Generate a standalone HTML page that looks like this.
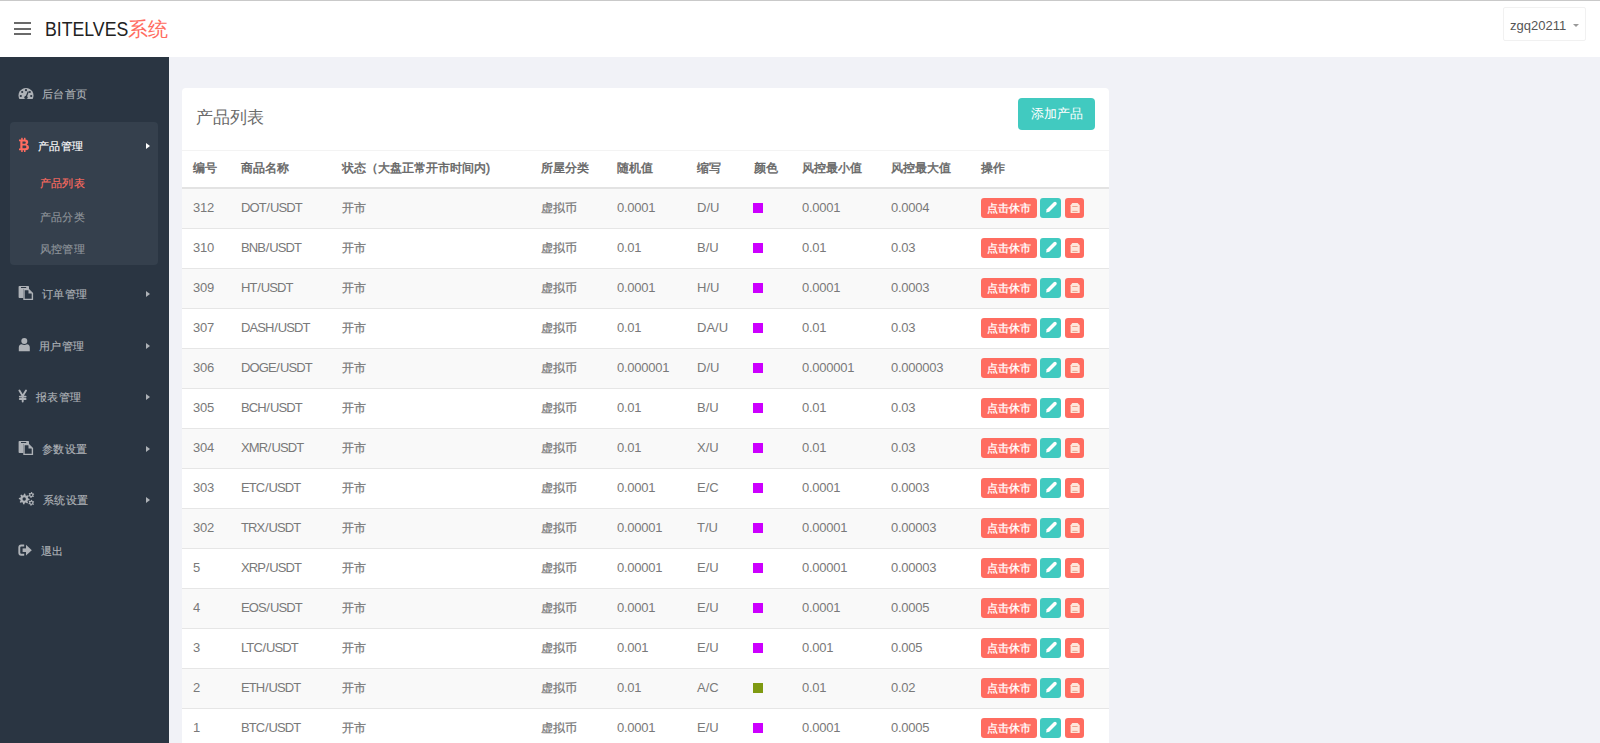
<!DOCTYPE html><html><head><meta charset="utf-8"><style>
*{margin:0;padding:0;box-sizing:border-box}
html,body{width:1600px;height:743px;overflow:hidden}
body{background:#f1f2f7;font-family:"Liberation Sans",sans-serif;font-size:13px;color:#797979;position:relative}
.abs{position:absolute}
.topline{left:0;top:0;width:1600px;height:1px;background:#c9c9c9}
.header{left:0;top:1px;width:1600px;height:56px;background:#fff}
.burger{left:14px;width:17px;height:2px;background:#6a6a6a}
.logo{left:45px;top:17px;font-size:20px;color:#222;white-space:nowrap;line-height:24px;transform-origin:0 0;transform:scaleX(.885)}
.logo2{left:128px;top:17px;font-size:20px;color:#ff6c60;white-space:nowrap;line-height:24px}
.user{left:1503px;top:7px;width:83px;height:34px;border:1px solid #f1f1f1;border-radius:2px}
.user .t{position:absolute;left:6px;top:10px;font-size:13px;color:#555;line-height:16px}
.caret{left:1573px;top:24px;width:0;height:0;border-left:3px solid transparent;border-right:3px solid transparent;border-top:3px solid #999}
.sidebar{left:0;top:57px;width:169px;height:686px;background:#2a3542}
.sub{left:10px;top:122px;width:148px;height:143px;background:#35404d;border-radius:4px}
.si{font-size:11px;letter-spacing:0.45px;-webkit-text-stroke:0.15px currentColor;color:#aeb2b7;line-height:14px;white-space:nowrap}
.arr{width:0;height:0;border-top:3.5px solid transparent;border-bottom:3.5px solid transparent;border-left:4px solid #aeb2b7}
.card{left:182px;top:88px;width:927px;height:700px;background:#fff;border-radius:4px}
.title{left:196px;top:107px;font-size:17px;color:#6a6a6a;line-height:22px}
.addbtn{left:1018px;top:98px;width:77px;height:32px;background:#41cac0;border-radius:4px;color:#fff;font-size:13px;line-height:32px;text-align:center}
.hline{left:182px;top:150px;width:927px;height:1px;background:#f3f3f3}
.th{top:161px;font-size:12.2px;font-weight:normal;-webkit-text-stroke:0.45px #666;color:#666;line-height:14px;white-space:nowrap}
.thb{left:182px;top:187px;width:927px;height:2px;background:#e3e3e3}
.row{left:182px;width:927px;height:40px}
.row.odd{background:#f9f9f9}
.rb{left:182px;width:927px;height:1px;background:#e6e6e6}
.td{font-size:13px;color:#797979;line-height:14px;white-space:nowrap}
.td.cj{font-size:12px;-webkit-text-stroke:0.25px #797979}
.td.nm{letter-spacing:-0.9px}
.sl{margin:0 0.9px 0 0.6px}
.td.num{letter-spacing:-0.25px}
.sq{width:10px;height:10px}
.b1{left:981px;width:56px;height:20px;background:#ff6c60;border-radius:3px;color:#fff;font-size:11px;-webkit-text-stroke:0.3px #fff;line-height:20px;text-align:center}
.b2{left:1040px;width:21px;height:20px;background:#41cac0;border-radius:3px}
.b3{left:1065px;width:19px;height:20px;background:#ff6c60;border-radius:3px}
.b2 svg,.b3 svg{position:absolute;left:0;top:0}
</style></head><body>
<div class="abs header"></div><div class="abs topline"></div>
<div class="abs burger" style="top:22px"></div>
<div class="abs burger" style="top:28px"></div>
<div class="abs burger" style="top:33px"></div>
<div class="abs logo">BITELVES</div><div class="abs logo2">系统</div>
<div class="abs user"><div class="t">zgq20211</div></div><div class="abs caret"></div>
<div class="abs sidebar"></div>
<div class="abs sub"></div>
<svg class="abs" style="left:18px;top:87px" width="16" height="13" viewBox="0 0 16 13">
<path d="M1.37 12 A7.5 7.5 0 1 1 14.63 12 Z" fill="#aeb2b7"/>
<circle cx="8" cy="3.2" r="1.1" fill="#2a3542"/><circle cx="4.2" cy="5" r="1.1" fill="#2a3542"/><circle cx="11.8" cy="5" r="1.1" fill="#2a3542"/>
<circle cx="2.8" cy="9" r="1.1" fill="#2a3542"/><circle cx="13.2" cy="9" r="1.1" fill="#2a3542"/>
<path d="M8 10.3 L10.3 4.6" stroke="#2a3542" stroke-width="1.3"/><circle cx="8" cy="10.4" r="1.7" fill="#2a3542"/></svg>
<div class="abs si" style="left:42px;top:87px;color:#aeb2b7">后台首页</div>
<svg class="abs" style="left:18px;top:137px" width="13" height="16" viewBox="0 0 13 16">
<rect x="3.2" y="0.8" width="1.5" height="2.5" fill="#ff6c60"/><rect x="6" y="0.8" width="1.5" height="2.5" fill="#ff6c60"/>
<rect x="3.2" y="12.5" width="1.5" height="2.5" fill="#ff6c60"/><rect x="6" y="12.5" width="1.5" height="2.5" fill="#ff6c60"/>
<path d="M1 2.6 H7.2 Q10.2 2.6 10.2 5.2 Q10.2 6.8 8.8 7.4 Q11 8 11 10.3 Q11 13.2 7.6 13.2 H1 V11.6 H2.3 V4.2 H1 Z M4.5 4.4 V6.8 H6.6 Q7.8 6.8 7.8 5.6 Q7.8 4.4 6.6 4.4 Z M4.5 8.6 V11.3 H7 Q8.4 11.3 8.4 9.95 Q8.4 8.6 7 8.6 Z" fill="#ff6c60" fill-rule="evenodd"/></svg>
<div class="abs si" style="left:38px;top:139px;color:#fff">产品管理</div>
<div class="abs arr" style="left:146px;top:143px;border-left-color:#fff"></div>
<svg class="abs" style="left:18px;top:285px" width="16" height="16" viewBox="0 0 16 16">
<rect x="0.6" y="1" width="10.4" height="12" rx="0.8" fill="#aeb2b7"/>
<rect x="3" y="2" width="5.2" height="1" fill="#2a3542"/>
<path d="M5.2 4 H11.2 L15 7.8 V15 H5.2 Z" fill="#2a3542"/>
<path d="M6 4.6 H10.8 L14.4 8.2 V14.4 H6 Z" fill="none" stroke="#aeb2b7" stroke-width="1.4"/>
<path d="M10.5 4.6 V8.5 H14.4" fill="#aeb2b7"/></svg>
<div class="abs si" style="left:42px;top:287px;color:#aeb2b7">订单管理</div>
<div class="abs arr" style="left:146px;top:291px;border-left-color:#aeb2b7"></div>
<svg class="abs" style="left:18px;top:337px" width="13" height="15" viewBox="0 0 13 15">
<circle cx="6.3" cy="4" r="3" fill="#aeb2b7"/>
<path d="M0.8 14.2 V10.5 Q0.8 7.6 3.6 7.3 Q6.3 8.6 9 7.3 Q11.8 7.6 11.8 10.5 V14.2 Z" fill="#aeb2b7"/></svg>
<div class="abs si" style="left:39px;top:339px;color:#aeb2b7">用户管理</div>
<div class="abs arr" style="left:146px;top:343px;border-left-color:#aeb2b7"></div>
<svg class="abs" style="left:18px;top:389px" width="10" height="14" viewBox="0 0 10 14">
<path d="M1.4 1.6 L4.7 7 L8 1.6 M4.7 7 V12.6 M1.8 7.6 H7.6 M1.8 10 H7.6" stroke="#aeb2b7" stroke-width="1.9" fill="none" stroke-linecap="round"/></svg>
<div class="abs si" style="left:36px;top:390px;color:#aeb2b7">报表管理</div>
<div class="abs arr" style="left:146px;top:394px;border-left-color:#aeb2b7"></div>
<svg class="abs" style="left:18px;top:440px" width="16" height="16" viewBox="0 0 16 16">
<rect x="0.6" y="1" width="10.4" height="12" rx="0.8" fill="#aeb2b7"/>
<rect x="3" y="2" width="5.2" height="1" fill="#2a3542"/>
<path d="M5.2 4 H11.2 L15 7.8 V15 H5.2 Z" fill="#2a3542"/>
<path d="M6 4.6 H10.8 L14.4 8.2 V14.4 H6 Z" fill="none" stroke="#aeb2b7" stroke-width="1.4"/>
<path d="M10.5 4.6 V8.5 H14.4" fill="#aeb2b7"/></svg>
<div class="abs si" style="left:42px;top:442px;color:#aeb2b7">参数设置</div>
<div class="abs arr" style="left:146px;top:446px;border-left-color:#aeb2b7"></div>
<svg class="abs" style="left:18px;top:492px" width="18" height="15" viewBox="0 0 18 15">
<path d="M6.20 1.60 L7.25 1.70 L7.69 3.40 L8.37 3.76 L10.02 3.18 L10.69 4.00 L9.80 5.51 L10.03 6.24 L11.60 7.00 L11.50 8.05 L9.80 8.49 L9.44 9.17 L10.02 10.82 L9.20 11.49 L7.69 10.60 L6.96 10.83 L6.20 12.40 L5.15 12.30 L4.71 10.60 L4.03 10.24 L2.38 10.82 L1.71 10.00 L2.60 8.49 L2.37 7.76 L0.80 7.00 L0.90 5.95 L2.60 5.51 L2.96 4.83 L2.38 3.18 L3.20 2.51 L4.71 3.40 L5.44 3.17 Z" fill="#aeb2b7"/><circle cx="6.2" cy="7" r="1.7" fill="#2a3542"/><path d="M13.30 0.00 L14.08 0.10 L14.35 1.18 L14.78 1.52 L15.90 1.50 L16.20 2.22 L15.40 3.00 L15.33 3.54 L15.90 4.50 L15.42 5.12 L14.35 4.82 L13.84 5.03 L13.30 6.00 L12.52 5.90 L12.25 4.82 L11.82 4.48 L10.70 4.50 L10.40 3.78 L11.20 3.00 L11.27 2.46 L10.70 1.50 L11.18 0.88 L12.25 1.18 L12.76 0.97 Z" fill="#aeb2b7"/><circle cx="13.3" cy="3" r="1" fill="#2a3542"/><path d="M13.30 7.80 L14.08 7.90 L14.35 8.98 L14.78 9.32 L15.90 9.30 L16.20 10.02 L15.40 10.80 L15.33 11.34 L15.90 12.30 L15.42 12.92 L14.35 12.62 L13.84 12.83 L13.30 13.80 L12.52 13.70 L12.25 12.62 L11.82 12.28 L10.70 12.30 L10.40 11.58 L11.20 10.80 L11.27 10.26 L10.70 9.30 L11.18 8.68 L12.25 8.98 L12.76 8.77 Z" fill="#aeb2b7"/><circle cx="13.3" cy="10.8" r="1" fill="#2a3542"/></svg>
<div class="abs si" style="left:43px;top:493px;color:#aeb2b7">系统设置</div>
<div class="abs arr" style="left:146px;top:497px;border-left-color:#aeb2b7"></div>
<svg class="abs" style="left:18px;top:544px" width="15" height="13" viewBox="0 0 15 13">
<path d="M6.2 1.5 H3.2 Q1.3 1.5 1.3 3.4 V8.8 Q1.3 10.7 3.2 10.7 H6.2" stroke="#aeb2b7" stroke-width="1.9" fill="none"/>
<rect x="4.6" y="4.4" width="4.5" height="3.6" fill="#aeb2b7"/><path d="M8 0.8 L13.8 6.2 L8 11.6 Z" fill="#aeb2b7"/></svg>
<div class="abs si" style="left:41px;top:544px;color:#aeb2b7">退出</div>
<div class="abs si" style="left:39.5px;top:176px;color:#ff6c60">产品列表</div>
<div class="abs si" style="left:39.5px;top:210px;color:#8f959b">产品分类</div>
<div class="abs si" style="left:39.5px;top:242px;color:#8f959b">风控管理</div>
<div class="abs card"></div>
<div class="abs title">产品列表</div>
<div class="abs addbtn">添加产品</div>
<div class="abs hline"></div>
<div class="abs th" style="left:193px">编号</div>
<div class="abs th" style="left:241px">商品名称</div>
<div class="abs th" style="left:342px">状态（大盘正常开市时间内)</div>
<div class="abs th" style="left:541px">所屋分类</div>
<div class="abs th" style="left:617px">随机值</div>
<div class="abs th" style="left:697px">缩写</div>
<div class="abs th" style="left:754px">颜色</div>
<div class="abs th" style="left:802px">风控最小值</div>
<div class="abs th" style="left:891px">风控最大值</div>
<div class="abs th" style="left:981px">操作</div>
<div class="abs thb"></div>
<div class="abs row odd" style="top:189px"></div>
<div class="abs rb" style="top:228px"></div>
<div class="abs td num" style="left:193px;top:201px">312</div>
<div class="abs td nm" style="left:241px;top:201px">DOT<span class="sl">/</span>USDT</div>
<div class="abs td cj" style="left:342px;top:201px">开市</div>
<div class="abs td cj" style="left:541px;top:201px">虚拟币</div>
<div class="abs td num" style="left:617px;top:201px">0.0001</div>
<div class="abs td " style="left:697px;top:201px">D/U</div>
<div class="abs sq" style="left:753px;top:203px;background:#cc00ff"></div>
<div class="abs td num" style="left:802px;top:201px">0.0001</div>
<div class="abs td num" style="left:891px;top:201px">0.0004</div>
<div class="abs b1" style="top:198px">点击休市</div>
<div class="abs b2" style="top:198px"><svg width="21" height="20" viewBox="0 0 21 20"><path d="M13.73 4.23 Q15 3.2 16.27 4.23 Q17.3 5.5 16.27 6.77 L9.27 13.77 L6.1 14.4 L6.73 11.23 Z" fill="#fff"/></svg></div>
<div class="abs b3" style="top:198px"><svg width="19" height="20" viewBox="0 0 19 20"><path d="M7.3 5 H12.6 L14.7 7.3 V14.4 Q14.7 15.1 14 15.1 H6.3 Q5.6 15.1 5.6 14.4 V7.3 Z" fill="#fde6da"/><rect x="7.3" y="8" width="5.3" height="1" fill="#f0a08a"/><rect x="7.3" y="12.9" width="5.3" height="1" fill="#f0a08a"/></svg></div>
<div class="abs row " style="top:229px"></div>
<div class="abs rb" style="top:268px"></div>
<div class="abs td num" style="left:193px;top:241px">310</div>
<div class="abs td nm" style="left:241px;top:241px">BNB<span class="sl">/</span>USDT</div>
<div class="abs td cj" style="left:342px;top:241px">开市</div>
<div class="abs td cj" style="left:541px;top:241px">虚拟币</div>
<div class="abs td num" style="left:617px;top:241px">0.01</div>
<div class="abs td " style="left:697px;top:241px">B/U</div>
<div class="abs sq" style="left:753px;top:243px;background:#cc00ff"></div>
<div class="abs td num" style="left:802px;top:241px">0.01</div>
<div class="abs td num" style="left:891px;top:241px">0.03</div>
<div class="abs b1" style="top:238px">点击休市</div>
<div class="abs b2" style="top:238px"><svg width="21" height="20" viewBox="0 0 21 20"><path d="M13.73 4.23 Q15 3.2 16.27 4.23 Q17.3 5.5 16.27 6.77 L9.27 13.77 L6.1 14.4 L6.73 11.23 Z" fill="#fff"/></svg></div>
<div class="abs b3" style="top:238px"><svg width="19" height="20" viewBox="0 0 19 20"><path d="M7.3 5 H12.6 L14.7 7.3 V14.4 Q14.7 15.1 14 15.1 H6.3 Q5.6 15.1 5.6 14.4 V7.3 Z" fill="#fde6da"/><rect x="7.3" y="8" width="5.3" height="1" fill="#f0a08a"/><rect x="7.3" y="12.9" width="5.3" height="1" fill="#f0a08a"/></svg></div>
<div class="abs row odd" style="top:269px"></div>
<div class="abs rb" style="top:308px"></div>
<div class="abs td num" style="left:193px;top:281px">309</div>
<div class="abs td nm" style="left:241px;top:281px">HT<span class="sl">/</span>USDT</div>
<div class="abs td cj" style="left:342px;top:281px">开市</div>
<div class="abs td cj" style="left:541px;top:281px">虚拟币</div>
<div class="abs td num" style="left:617px;top:281px">0.0001</div>
<div class="abs td " style="left:697px;top:281px">H/U</div>
<div class="abs sq" style="left:753px;top:283px;background:#cc00ff"></div>
<div class="abs td num" style="left:802px;top:281px">0.0001</div>
<div class="abs td num" style="left:891px;top:281px">0.0003</div>
<div class="abs b1" style="top:278px">点击休市</div>
<div class="abs b2" style="top:278px"><svg width="21" height="20" viewBox="0 0 21 20"><path d="M13.73 4.23 Q15 3.2 16.27 4.23 Q17.3 5.5 16.27 6.77 L9.27 13.77 L6.1 14.4 L6.73 11.23 Z" fill="#fff"/></svg></div>
<div class="abs b3" style="top:278px"><svg width="19" height="20" viewBox="0 0 19 20"><path d="M7.3 5 H12.6 L14.7 7.3 V14.4 Q14.7 15.1 14 15.1 H6.3 Q5.6 15.1 5.6 14.4 V7.3 Z" fill="#fde6da"/><rect x="7.3" y="8" width="5.3" height="1" fill="#f0a08a"/><rect x="7.3" y="12.9" width="5.3" height="1" fill="#f0a08a"/></svg></div>
<div class="abs row " style="top:309px"></div>
<div class="abs rb" style="top:348px"></div>
<div class="abs td num" style="left:193px;top:321px">307</div>
<div class="abs td nm" style="left:241px;top:321px">DASH<span class="sl">/</span>USDT</div>
<div class="abs td cj" style="left:342px;top:321px">开市</div>
<div class="abs td cj" style="left:541px;top:321px">虚拟币</div>
<div class="abs td num" style="left:617px;top:321px">0.01</div>
<div class="abs td " style="left:697px;top:321px">DA/U</div>
<div class="abs sq" style="left:753px;top:323px;background:#cc00ff"></div>
<div class="abs td num" style="left:802px;top:321px">0.01</div>
<div class="abs td num" style="left:891px;top:321px">0.03</div>
<div class="abs b1" style="top:318px">点击休市</div>
<div class="abs b2" style="top:318px"><svg width="21" height="20" viewBox="0 0 21 20"><path d="M13.73 4.23 Q15 3.2 16.27 4.23 Q17.3 5.5 16.27 6.77 L9.27 13.77 L6.1 14.4 L6.73 11.23 Z" fill="#fff"/></svg></div>
<div class="abs b3" style="top:318px"><svg width="19" height="20" viewBox="0 0 19 20"><path d="M7.3 5 H12.6 L14.7 7.3 V14.4 Q14.7 15.1 14 15.1 H6.3 Q5.6 15.1 5.6 14.4 V7.3 Z" fill="#fde6da"/><rect x="7.3" y="8" width="5.3" height="1" fill="#f0a08a"/><rect x="7.3" y="12.9" width="5.3" height="1" fill="#f0a08a"/></svg></div>
<div class="abs row odd" style="top:349px"></div>
<div class="abs rb" style="top:388px"></div>
<div class="abs td num" style="left:193px;top:361px">306</div>
<div class="abs td nm" style="left:241px;top:361px">DOGE<span class="sl">/</span>USDT</div>
<div class="abs td cj" style="left:342px;top:361px">开市</div>
<div class="abs td cj" style="left:541px;top:361px">虚拟币</div>
<div class="abs td num" style="left:617px;top:361px">0.000001</div>
<div class="abs td " style="left:697px;top:361px">D/U</div>
<div class="abs sq" style="left:753px;top:363px;background:#cc00ff"></div>
<div class="abs td num" style="left:802px;top:361px">0.000001</div>
<div class="abs td num" style="left:891px;top:361px">0.000003</div>
<div class="abs b1" style="top:358px">点击休市</div>
<div class="abs b2" style="top:358px"><svg width="21" height="20" viewBox="0 0 21 20"><path d="M13.73 4.23 Q15 3.2 16.27 4.23 Q17.3 5.5 16.27 6.77 L9.27 13.77 L6.1 14.4 L6.73 11.23 Z" fill="#fff"/></svg></div>
<div class="abs b3" style="top:358px"><svg width="19" height="20" viewBox="0 0 19 20"><path d="M7.3 5 H12.6 L14.7 7.3 V14.4 Q14.7 15.1 14 15.1 H6.3 Q5.6 15.1 5.6 14.4 V7.3 Z" fill="#fde6da"/><rect x="7.3" y="8" width="5.3" height="1" fill="#f0a08a"/><rect x="7.3" y="12.9" width="5.3" height="1" fill="#f0a08a"/></svg></div>
<div class="abs row " style="top:389px"></div>
<div class="abs rb" style="top:428px"></div>
<div class="abs td num" style="left:193px;top:401px">305</div>
<div class="abs td nm" style="left:241px;top:401px">BCH<span class="sl">/</span>USDT</div>
<div class="abs td cj" style="left:342px;top:401px">开市</div>
<div class="abs td cj" style="left:541px;top:401px">虚拟币</div>
<div class="abs td num" style="left:617px;top:401px">0.01</div>
<div class="abs td " style="left:697px;top:401px">B/U</div>
<div class="abs sq" style="left:753px;top:403px;background:#cc00ff"></div>
<div class="abs td num" style="left:802px;top:401px">0.01</div>
<div class="abs td num" style="left:891px;top:401px">0.03</div>
<div class="abs b1" style="top:398px">点击休市</div>
<div class="abs b2" style="top:398px"><svg width="21" height="20" viewBox="0 0 21 20"><path d="M13.73 4.23 Q15 3.2 16.27 4.23 Q17.3 5.5 16.27 6.77 L9.27 13.77 L6.1 14.4 L6.73 11.23 Z" fill="#fff"/></svg></div>
<div class="abs b3" style="top:398px"><svg width="19" height="20" viewBox="0 0 19 20"><path d="M7.3 5 H12.6 L14.7 7.3 V14.4 Q14.7 15.1 14 15.1 H6.3 Q5.6 15.1 5.6 14.4 V7.3 Z" fill="#fde6da"/><rect x="7.3" y="8" width="5.3" height="1" fill="#f0a08a"/><rect x="7.3" y="12.9" width="5.3" height="1" fill="#f0a08a"/></svg></div>
<div class="abs row odd" style="top:429px"></div>
<div class="abs rb" style="top:468px"></div>
<div class="abs td num" style="left:193px;top:441px">304</div>
<div class="abs td nm" style="left:241px;top:441px">XMR<span class="sl">/</span>USDT</div>
<div class="abs td cj" style="left:342px;top:441px">开市</div>
<div class="abs td cj" style="left:541px;top:441px">虚拟币</div>
<div class="abs td num" style="left:617px;top:441px">0.01</div>
<div class="abs td " style="left:697px;top:441px">X/U</div>
<div class="abs sq" style="left:753px;top:443px;background:#cc00ff"></div>
<div class="abs td num" style="left:802px;top:441px">0.01</div>
<div class="abs td num" style="left:891px;top:441px">0.03</div>
<div class="abs b1" style="top:438px">点击休市</div>
<div class="abs b2" style="top:438px"><svg width="21" height="20" viewBox="0 0 21 20"><path d="M13.73 4.23 Q15 3.2 16.27 4.23 Q17.3 5.5 16.27 6.77 L9.27 13.77 L6.1 14.4 L6.73 11.23 Z" fill="#fff"/></svg></div>
<div class="abs b3" style="top:438px"><svg width="19" height="20" viewBox="0 0 19 20"><path d="M7.3 5 H12.6 L14.7 7.3 V14.4 Q14.7 15.1 14 15.1 H6.3 Q5.6 15.1 5.6 14.4 V7.3 Z" fill="#fde6da"/><rect x="7.3" y="8" width="5.3" height="1" fill="#f0a08a"/><rect x="7.3" y="12.9" width="5.3" height="1" fill="#f0a08a"/></svg></div>
<div class="abs row " style="top:469px"></div>
<div class="abs rb" style="top:508px"></div>
<div class="abs td num" style="left:193px;top:481px">303</div>
<div class="abs td nm" style="left:241px;top:481px">ETC<span class="sl">/</span>USDT</div>
<div class="abs td cj" style="left:342px;top:481px">开市</div>
<div class="abs td cj" style="left:541px;top:481px">虚拟币</div>
<div class="abs td num" style="left:617px;top:481px">0.0001</div>
<div class="abs td " style="left:697px;top:481px">E/C</div>
<div class="abs sq" style="left:753px;top:483px;background:#cc00ff"></div>
<div class="abs td num" style="left:802px;top:481px">0.0001</div>
<div class="abs td num" style="left:891px;top:481px">0.0003</div>
<div class="abs b1" style="top:478px">点击休市</div>
<div class="abs b2" style="top:478px"><svg width="21" height="20" viewBox="0 0 21 20"><path d="M13.73 4.23 Q15 3.2 16.27 4.23 Q17.3 5.5 16.27 6.77 L9.27 13.77 L6.1 14.4 L6.73 11.23 Z" fill="#fff"/></svg></div>
<div class="abs b3" style="top:478px"><svg width="19" height="20" viewBox="0 0 19 20"><path d="M7.3 5 H12.6 L14.7 7.3 V14.4 Q14.7 15.1 14 15.1 H6.3 Q5.6 15.1 5.6 14.4 V7.3 Z" fill="#fde6da"/><rect x="7.3" y="8" width="5.3" height="1" fill="#f0a08a"/><rect x="7.3" y="12.9" width="5.3" height="1" fill="#f0a08a"/></svg></div>
<div class="abs row odd" style="top:509px"></div>
<div class="abs rb" style="top:548px"></div>
<div class="abs td num" style="left:193px;top:521px">302</div>
<div class="abs td nm" style="left:241px;top:521px">TRX<span class="sl">/</span>USDT</div>
<div class="abs td cj" style="left:342px;top:521px">开市</div>
<div class="abs td cj" style="left:541px;top:521px">虚拟币</div>
<div class="abs td num" style="left:617px;top:521px">0.00001</div>
<div class="abs td " style="left:697px;top:521px">T/U</div>
<div class="abs sq" style="left:753px;top:523px;background:#cc00ff"></div>
<div class="abs td num" style="left:802px;top:521px">0.00001</div>
<div class="abs td num" style="left:891px;top:521px">0.00003</div>
<div class="abs b1" style="top:518px">点击休市</div>
<div class="abs b2" style="top:518px"><svg width="21" height="20" viewBox="0 0 21 20"><path d="M13.73 4.23 Q15 3.2 16.27 4.23 Q17.3 5.5 16.27 6.77 L9.27 13.77 L6.1 14.4 L6.73 11.23 Z" fill="#fff"/></svg></div>
<div class="abs b3" style="top:518px"><svg width="19" height="20" viewBox="0 0 19 20"><path d="M7.3 5 H12.6 L14.7 7.3 V14.4 Q14.7 15.1 14 15.1 H6.3 Q5.6 15.1 5.6 14.4 V7.3 Z" fill="#fde6da"/><rect x="7.3" y="8" width="5.3" height="1" fill="#f0a08a"/><rect x="7.3" y="12.9" width="5.3" height="1" fill="#f0a08a"/></svg></div>
<div class="abs row " style="top:549px"></div>
<div class="abs rb" style="top:588px"></div>
<div class="abs td num" style="left:193px;top:561px">5</div>
<div class="abs td nm" style="left:241px;top:561px">XRP<span class="sl">/</span>USDT</div>
<div class="abs td cj" style="left:342px;top:561px">开市</div>
<div class="abs td cj" style="left:541px;top:561px">虚拟币</div>
<div class="abs td num" style="left:617px;top:561px">0.00001</div>
<div class="abs td " style="left:697px;top:561px">E/U</div>
<div class="abs sq" style="left:753px;top:563px;background:#cc00ff"></div>
<div class="abs td num" style="left:802px;top:561px">0.00001</div>
<div class="abs td num" style="left:891px;top:561px">0.00003</div>
<div class="abs b1" style="top:558px">点击休市</div>
<div class="abs b2" style="top:558px"><svg width="21" height="20" viewBox="0 0 21 20"><path d="M13.73 4.23 Q15 3.2 16.27 4.23 Q17.3 5.5 16.27 6.77 L9.27 13.77 L6.1 14.4 L6.73 11.23 Z" fill="#fff"/></svg></div>
<div class="abs b3" style="top:558px"><svg width="19" height="20" viewBox="0 0 19 20"><path d="M7.3 5 H12.6 L14.7 7.3 V14.4 Q14.7 15.1 14 15.1 H6.3 Q5.6 15.1 5.6 14.4 V7.3 Z" fill="#fde6da"/><rect x="7.3" y="8" width="5.3" height="1" fill="#f0a08a"/><rect x="7.3" y="12.9" width="5.3" height="1" fill="#f0a08a"/></svg></div>
<div class="abs row odd" style="top:589px"></div>
<div class="abs rb" style="top:628px"></div>
<div class="abs td num" style="left:193px;top:601px">4</div>
<div class="abs td nm" style="left:241px;top:601px">EOS<span class="sl">/</span>USDT</div>
<div class="abs td cj" style="left:342px;top:601px">开市</div>
<div class="abs td cj" style="left:541px;top:601px">虚拟币</div>
<div class="abs td num" style="left:617px;top:601px">0.0001</div>
<div class="abs td " style="left:697px;top:601px">E/U</div>
<div class="abs sq" style="left:753px;top:603px;background:#cc00ff"></div>
<div class="abs td num" style="left:802px;top:601px">0.0001</div>
<div class="abs td num" style="left:891px;top:601px">0.0005</div>
<div class="abs b1" style="top:598px">点击休市</div>
<div class="abs b2" style="top:598px"><svg width="21" height="20" viewBox="0 0 21 20"><path d="M13.73 4.23 Q15 3.2 16.27 4.23 Q17.3 5.5 16.27 6.77 L9.27 13.77 L6.1 14.4 L6.73 11.23 Z" fill="#fff"/></svg></div>
<div class="abs b3" style="top:598px"><svg width="19" height="20" viewBox="0 0 19 20"><path d="M7.3 5 H12.6 L14.7 7.3 V14.4 Q14.7 15.1 14 15.1 H6.3 Q5.6 15.1 5.6 14.4 V7.3 Z" fill="#fde6da"/><rect x="7.3" y="8" width="5.3" height="1" fill="#f0a08a"/><rect x="7.3" y="12.9" width="5.3" height="1" fill="#f0a08a"/></svg></div>
<div class="abs row " style="top:629px"></div>
<div class="abs rb" style="top:668px"></div>
<div class="abs td num" style="left:193px;top:641px">3</div>
<div class="abs td nm" style="left:241px;top:641px">LTC<span class="sl">/</span>USDT</div>
<div class="abs td cj" style="left:342px;top:641px">开市</div>
<div class="abs td cj" style="left:541px;top:641px">虚拟币</div>
<div class="abs td num" style="left:617px;top:641px">0.001</div>
<div class="abs td " style="left:697px;top:641px">E/U</div>
<div class="abs sq" style="left:753px;top:643px;background:#cc00ff"></div>
<div class="abs td num" style="left:802px;top:641px">0.001</div>
<div class="abs td num" style="left:891px;top:641px">0.005</div>
<div class="abs b1" style="top:638px">点击休市</div>
<div class="abs b2" style="top:638px"><svg width="21" height="20" viewBox="0 0 21 20"><path d="M13.73 4.23 Q15 3.2 16.27 4.23 Q17.3 5.5 16.27 6.77 L9.27 13.77 L6.1 14.4 L6.73 11.23 Z" fill="#fff"/></svg></div>
<div class="abs b3" style="top:638px"><svg width="19" height="20" viewBox="0 0 19 20"><path d="M7.3 5 H12.6 L14.7 7.3 V14.4 Q14.7 15.1 14 15.1 H6.3 Q5.6 15.1 5.6 14.4 V7.3 Z" fill="#fde6da"/><rect x="7.3" y="8" width="5.3" height="1" fill="#f0a08a"/><rect x="7.3" y="12.9" width="5.3" height="1" fill="#f0a08a"/></svg></div>
<div class="abs row odd" style="top:669px"></div>
<div class="abs rb" style="top:708px"></div>
<div class="abs td num" style="left:193px;top:681px">2</div>
<div class="abs td nm" style="left:241px;top:681px">ETH<span class="sl">/</span>USDT</div>
<div class="abs td cj" style="left:342px;top:681px">开市</div>
<div class="abs td cj" style="left:541px;top:681px">虚拟币</div>
<div class="abs td num" style="left:617px;top:681px">0.01</div>
<div class="abs td " style="left:697px;top:681px">A/C</div>
<div class="abs sq" style="left:753px;top:683px;background:#7f9a12"></div>
<div class="abs td num" style="left:802px;top:681px">0.01</div>
<div class="abs td num" style="left:891px;top:681px">0.02</div>
<div class="abs b1" style="top:678px">点击休市</div>
<div class="abs b2" style="top:678px"><svg width="21" height="20" viewBox="0 0 21 20"><path d="M13.73 4.23 Q15 3.2 16.27 4.23 Q17.3 5.5 16.27 6.77 L9.27 13.77 L6.1 14.4 L6.73 11.23 Z" fill="#fff"/></svg></div>
<div class="abs b3" style="top:678px"><svg width="19" height="20" viewBox="0 0 19 20"><path d="M7.3 5 H12.6 L14.7 7.3 V14.4 Q14.7 15.1 14 15.1 H6.3 Q5.6 15.1 5.6 14.4 V7.3 Z" fill="#fde6da"/><rect x="7.3" y="8" width="5.3" height="1" fill="#f0a08a"/><rect x="7.3" y="12.9" width="5.3" height="1" fill="#f0a08a"/></svg></div>
<div class="abs row " style="top:709px"></div>
<div class="abs rb" style="top:748px"></div>
<div class="abs td num" style="left:193px;top:721px">1</div>
<div class="abs td nm" style="left:241px;top:721px">BTC<span class="sl">/</span>USDT</div>
<div class="abs td cj" style="left:342px;top:721px">开市</div>
<div class="abs td cj" style="left:541px;top:721px">虚拟币</div>
<div class="abs td num" style="left:617px;top:721px">0.0001</div>
<div class="abs td " style="left:697px;top:721px">E/U</div>
<div class="abs sq" style="left:753px;top:723px;background:#cc00ff"></div>
<div class="abs td num" style="left:802px;top:721px">0.0001</div>
<div class="abs td num" style="left:891px;top:721px">0.0005</div>
<div class="abs b1" style="top:718px">点击休市</div>
<div class="abs b2" style="top:718px"><svg width="21" height="20" viewBox="0 0 21 20"><path d="M13.73 4.23 Q15 3.2 16.27 4.23 Q17.3 5.5 16.27 6.77 L9.27 13.77 L6.1 14.4 L6.73 11.23 Z" fill="#fff"/></svg></div>
<div class="abs b3" style="top:718px"><svg width="19" height="20" viewBox="0 0 19 20"><path d="M7.3 5 H12.6 L14.7 7.3 V14.4 Q14.7 15.1 14 15.1 H6.3 Q5.6 15.1 5.6 14.4 V7.3 Z" fill="#fde6da"/><rect x="7.3" y="8" width="5.3" height="1" fill="#f0a08a"/><rect x="7.3" y="12.9" width="5.3" height="1" fill="#f0a08a"/></svg></div>
</body></html>
